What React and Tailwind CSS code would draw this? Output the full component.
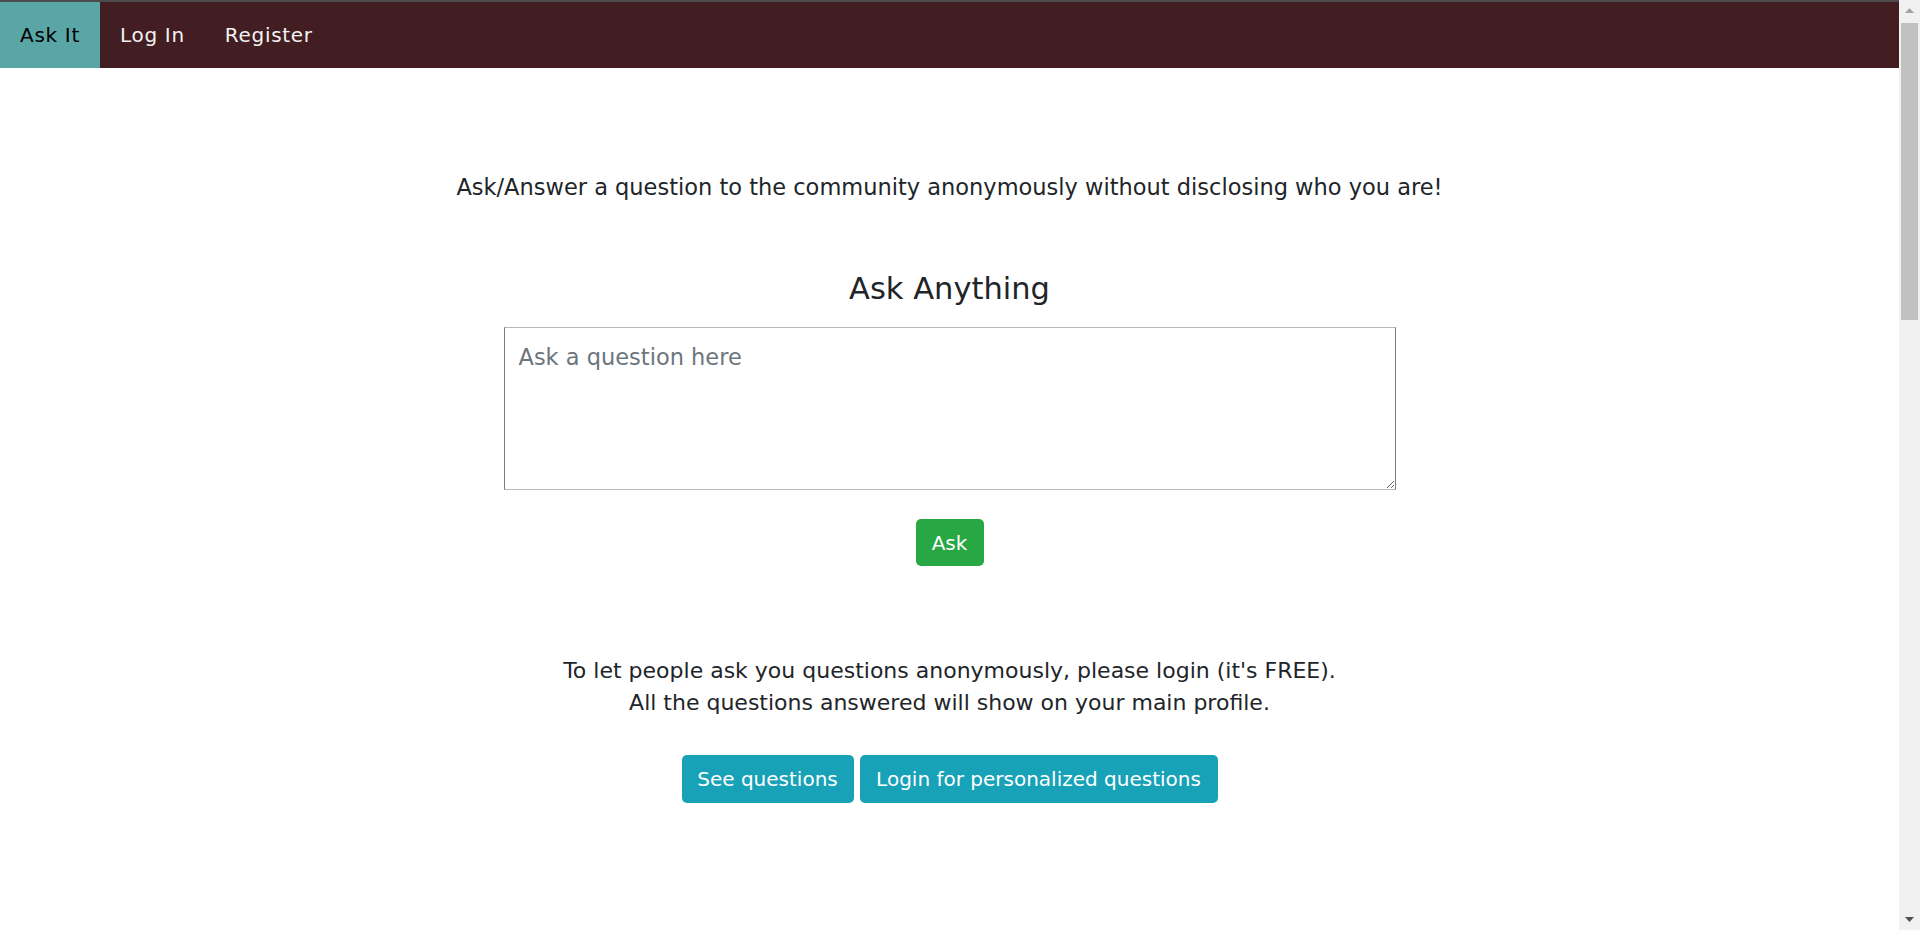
import React from "react";

const font = { fontFamily: '"DejaVu Sans", "Open Sans", sans-serif' };

function FakeScrollbar() {
  return (
    <aside className="sticky top-0 self-start w-[21px] h-[930px] bg-[#f1f1f1] flex flex-col items-center">
      <div className="h-[21px] w-full flex items-center justify-center">
        <svg width="9" height="5" viewBox="0 0 9 5">
          <polygon points="4.5,0 9,5 0,5" fill="#a3a3a3" />
        </svg>
      </div>
      <div className="mt-[2px] w-[17px] h-[297px] bg-[#c1c1c1]" />
      <div className="flex-1" />
      <div className="h-[21px] w-full flex items-center justify-center">
        <svg width="9" height="5" viewBox="0 0 9 5">
          <polygon points="0,0 9,0 4.5,5" fill="#505050" />
        </svg>
      </div>
    </aside>
  );
}

export default function App() {
  return (
    <div className="flex bg-white text-[#212529] text-[20px]" style={font}>
      <div className="flex-1 min-h-[2780px]">
        <nav className="h-[68px] border-t-2 border-[#4b4b4b] bg-[#421e22] flex items-stretch tracking-[0.7px]">
          <a className="flex items-center px-[20px] bg-[#5aa6a7] text-black">Ask It</a>
          <a className="flex items-center px-[20px] text-[#f2f2f2]">Log In</a>
          <a className="flex items-center px-[20px] text-[#f2f2f2]">Register</a>
        </nav>
        <main className="flex flex-col items-center text-center">
          <p className="mt-[104px] text-[22.5px] leading-[30px]">
            Ask/Answer a question to the community anonymously without disclosing who you are!
          </p>
          <h4 className="mt-[69px] text-[30.5px] leading-[36px] font-normal">Ask Anything</h4>
          <textarea
            className="mt-[20px] w-[892px] h-[163px] border border-x-[#7a7a7a] border-y-[#b8b8b8] px-[14px] pt-[13px] leading-[33px] text-[22.5px] text-[#495057] placeholder:text-[#6c757d] outline-none"
            placeholder="Ask a question here"
            style={font}
          />
          <button className="mt-[29px] w-[68px] h-[47px] rounded-[5px] bg-[#28a745] text-white text-[20px]">
            Ask
          </button>
          <p className="mt-[89px] text-[22px] leading-[32px]">
            To let people ask you questions anonymously, please login (it's FREE).
            <br />
            All the questions answered will show on your main profile.
          </p>
          <div className="mt-[36px] flex gap-[6px]">
            <button className="w-[172px] h-[48px] rounded-[5px] bg-[#17a2b8] text-white text-[20px]">
              See questions
            </button>
            <button className="w-[358px] h-[48px] rounded-[5px] bg-[#17a2b8] text-white text-[20px]">
              Login for personalized questions
            </button>
          </div>
        </main>
      </div>
      <FakeScrollbar />
    </div>
  );
}
